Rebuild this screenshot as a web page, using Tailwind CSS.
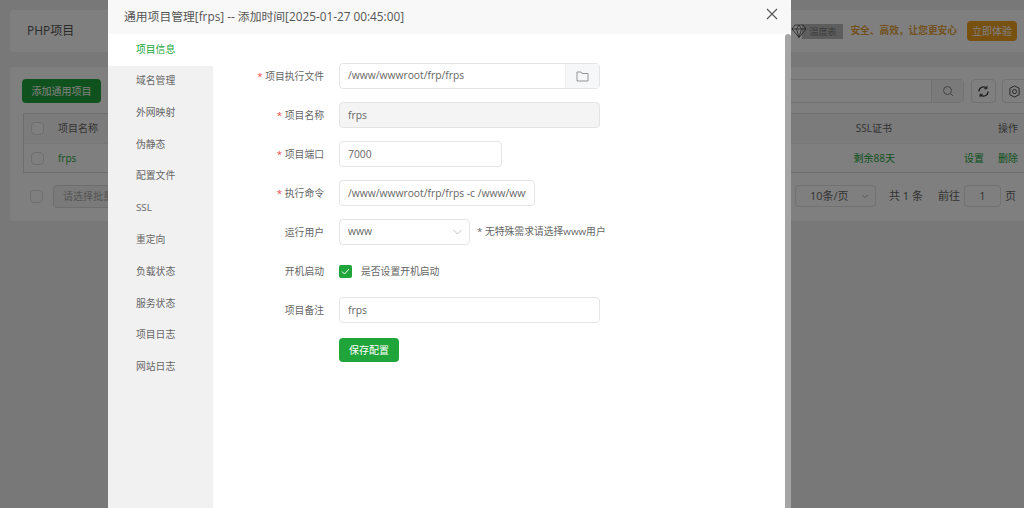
<!DOCTYPE html>
<html lang="zh-CN">

<head>
    <meta charset="UTF-8">
    <meta name="viewport" content="width=device-width, initial-scale=1.0">
    <title>通用项目管理</title>
    <script src="https://cdn.jsdelivr.net/npm/@tailwindcss/browser@4"></script>
</head>

<body class="overflow-hidden">
    <main class="relative w-[1024px] h-[508px] overflow-hidden bg-[#f0f0f0] font-['Open_Sans','Noto_Sans_CJK_SC',sans-serif] text-[#666]">
        <!-- page behind the dialog -->
        <div class="pl-[10px] pt-[10px]">
            <div class="h-[42px] bg-white rounded-l flex items-center pl-[17px] pr-[7px]">
                <span class="text-[12px] text-[#555] flex-1">PHP项目</span>
                <svg class="relative w-[16px] h-[16px] -mr-[5px] text-[#444]" viewBox="0 0 16 16" fill="none" stroke="currentColor" stroke-width="0.8"><path d="M4 2h8l3 4-7 8.500L1 6zM1 6h14M5.500 6 8 14.500 10.500 6 8 2 5.500 6z" /></svg>
                <span class="w-[41px] h-[15px] bg-[#bbb] text-[9px] leading-[15px] text-center text-[#777] mr-[7px]">温度表</span>
                <span class="text-[9.700px] font-semibold text-[#e6a23c] mr-[10px]">安全、高效，让您更安心</span>
                <span class="w-[50px] h-[20px] rounded-sm bg-[#f0a020] text-[10px] leading-[20px] text-center text-white">立即体验</span>
            </div>
            <div class="mt-[15px] h-[154px] bg-white rounded-l pl-[12px] pt-[12px]">
                <div class="flex items-center h-[24px]">
                    <button class="w-[79px] h-[24px] rounded bg-[#20a53a] text-white text-[10px]">添加通用项目</button>
                    <div class="flex-1"></div>
                    <div class="w-[190px] h-[24px] flex border border-[#e4e4e4] rounded-sm">
                        <div class="flex-1"></div>
                        <div class="w-[32px] bg-[#f5f5f5] border-l border-[#e4e4e4] flex items-center justify-center">
                            <svg class="w-[12px] h-[12px] text-[#888]" viewBox="0 0 12 12" fill="none" stroke="currentColor"><circle cx="5.500" cy="5.500" r="4" /><path d="m8.500 8.500 2.500 2.500" /></svg>
                        </div>
                    </div>
                    <div class="ml-[7px] w-[25px] h-[24px] border border-[#e4e4e4] rounded-sm flex items-center justify-center">
                        <svg class="w-[13px] h-[13px] text-[#333]" viewBox="0 0 14 14" fill="none" stroke="currentColor" stroke-width="1.300"><path d="M2 7a5 5 0 0 1 8.500-3.500M12 7a5 5 0 0 1-8.500 3.500" /><path d="M10.800 1v3h-3M3.200 13v-3h3" stroke-width="1" /></svg>
                    </div>
                    <div class="ml-[6px] w-[22px] h-[24px] border border-[#e4e4e4] border-r-0 rounded-l-sm flex items-center pl-[5px]">
                        <svg class="w-[13px] h-[13px] shrink-0 text-[#444]" viewBox="0 0 14 14" fill="none" stroke="currentColor"><path d="m7 1 5 2.500v7L7 13l-5-2.500v-7z" /><circle cx="7" cy="7" r="2.200" /></svg>
                    </div>
                </div>
                <div class="mt-[10px] ml-[1px] border-y border-l border-[#ddd] h-[60px] text-[10px]">
                    <div class="h-[30px] bg-[#f7f7f7] flex items-center border-b border-[#eee]">
                        <span class="ml-[7px] w-[13px] h-[13px] border border-[#ddd] bg-white rounded-sm"></span>
                        <span class="ml-[14px] text-[#666]">项目名称</span>
                        <span class="ml-auto mr-[106px]">SSL证书</span>
                        <span class="mr-[6px]">操作</span>
                    </div>
                    <div class="h-[29px] flex items-center">
                        <span class="ml-[7px] w-[13px] h-[13px] border border-[#ddd] bg-white rounded-sm"></span>
                        <span class="ml-[14px] text-[#20a53a]">frps</span>
                        <span class="ml-auto mr-[69px] text-[#20a53a]">剩余88天</span>
                        <span class="mr-[14px] text-[#20a53a]">设置</span>
                        <span class="mr-[6px] text-[#20a53a]">删除</span>
                    </div>
                </div>
                <div class="mt-[11px] flex items-center h-[24px] text-[11px]">
                    <span class="ml-[8px] w-[13px] h-[13px] border border-[#ddd] rounded-sm"></span>
                    <span class="ml-[10px] w-[70px] h-[23px] border border-[#ddd] bg-[#f5f5f5] rounded-sm text-[10px] leading-[21px] pl-[9px] text-[#aaa]">请选择批量</span>
                    <div class="flex-1"></div>
                    <span class="w-[81px] h-[22px] border border-[#e4e4e4] rounded-sm pl-[14px] mr-[13px] flex items-center justify-between pr-[6px]">10条/页<svg class="w-[8px] h-[8px] text-[#bbb]" viewBox="0 0 8 8" fill="none" stroke="currentColor"><path d="m1 3 3 2.500L7 3" /></svg></span>
                    <span class="mr-[15px]">共 1 条</span>
                    <span>前往</span>
                    <span class="mx-[4px] w-[37px] h-[22px] border border-[#e4e4e4] rounded-sm text-center leading-[20px]">1</span>
                    <span class="mr-[8px]">页</span>
                </div>
            </div>
        </div>

        <!-- mask -->
        <div class="absolute inset-0 bg-black/50"></div>

        <!-- dialog -->
        <div class="absolute left-[108px] top-0 w-[683px] h-[508px] bg-white flex flex-col">
            <div class="h-[34px] shrink-0 bg-[#f8f8f8] flex items-center pl-[16px] relative">
                <span class="text-[11.800px] text-[#555]">通用项目管理[frps] -- 添加时间[2025-01-27 00:45:00]</span>
                <svg class="absolute right-[13px] top-[8px] w-[12px] h-[12px] text-[#555]" viewBox="0 0 12 12" fill="none" stroke="currentColor" stroke-width="1.100"><path d="m1 1 10 10M11 1 1 11" /></svg>
            </div>
            <div class="flex flex-1 min-h-0 relative">
                <!-- side menu -->
                <div class="w-[105px] shrink-0 flex flex-col">
                    <div class="h-[32px] bg-white pl-[28px] pt-[7px] text-[9.800px] leading-[18px] text-[#20a53a]">项目信息</div>
                    <div class="flex-1 bg-[#f1f1f1] pl-[28px] text-[9.800px] text-[#666] flex flex-col">
                        <span class="h-[31.800px] leading-[30px]">域名管理</span>
                        <span class="h-[31.800px] leading-[30px]">外网映射</span>
                        <span class="h-[31.800px] leading-[30px]">伪静态</span>
                        <span class="h-[31.800px] leading-[30px]">配置文件</span>
                        <span class="h-[31.800px] leading-[30px]">SSL</span>
                        <span class="h-[31.800px] leading-[30px]">重定向</span>
                        <span class="h-[31.800px] leading-[30px]">负载状态</span>
                        <span class="h-[31.800px] leading-[30px]">服务状态</span>
                        <span class="h-[31.800px] leading-[30px]">项目日志</span>
                        <span class="h-[31.800px] leading-[30px]">网站日志</span>
                    </div>
                </div>
                <!-- form -->
                <div class="flex-1 pt-[29px] text-[9.800px] text-[#666] flex flex-col gap-[13px]">
                    <div class="flex items-center h-[26px]">
                        <label class="w-[111px] pt-[2px] text-right"><span class="text-[#ef4444]">*</span> 项目执行文件</label>
                        <div class="ml-[15px] w-[261px] h-[26px] flex border border-[#e4e4e4] rounded-sm">
                            <input class="flex-1 min-w-0 pl-[8px] text-[10.300px] outline-none" value="/www/wwwroot/frp/frps" readonly>
                            <span class="w-[34px] bg-[#f5f7f9] border-l border-[#eee] flex items-center justify-center">
                                <svg class="w-[13px] h-[12px] text-[#888]" viewBox="0 0 13 12" fill="none" stroke="currentColor" stroke-width="0.900"><path d="M1 2h4l1 1.500h6V11H1z" /></svg>
                            </span>
                        </div>
                    </div>
                    <div class="flex items-center h-[26px]">
                        <label class="w-[111px] pt-[2px] text-right"><span class="text-[#ef4444]">*</span> 项目名称</label>
                        <input class="ml-[15px] w-[261px] h-[26px] border border-[#e4e4e4] bg-[#f4f4f4] rounded-sm text-[10.300px] pl-[8px] outline-none" value="frps" readonly>
                    </div>
                    <div class="flex items-center h-[26px]">
                        <label class="w-[111px] pt-[2px] text-right"><span class="text-[#ef4444]">*</span> 项目端口</label>
                        <input class="ml-[15px] w-[163px] h-[26px] border border-[#e4e4e4] rounded-sm text-[10.300px] pl-[8px] outline-none" value="7000" readonly>
                    </div>
                    <div class="flex items-center h-[26px]">
                        <label class="w-[111px] pt-[2px] text-right"><span class="text-[#ef4444]">*</span> 执行命令</label>
                        <input class="ml-[15px] w-[196px] h-[26px] border border-[#e4e4e4] rounded-sm text-[10.300px] pl-[8px] pr-[8px] outline-none" value="/www/wwwroot/frp/frps -c /www/wwwroot/frp/frps.toml" readonly>
                    </div>
                    <div class="flex items-center h-[26px]">
                        <label class="w-[111px] pt-[2px] text-right">运行用户</label>
                        <div class="ml-[15px] w-[131px] h-[26px] border border-[#e4e4e4] rounded-sm text-[10.300px] pl-[8px] pr-[7px] flex items-center justify-between">
                            www
                            <svg class="w-[9px] h-[6px] text-[#bbb]" viewBox="0 0 9 6" fill="none" stroke="currentColor" stroke-width="0.900"><path d="m.5 1 4 4 4-4" /></svg>
                        </div>
                        <span class="ml-[7px] whitespace-nowrap">* 无特殊需求请选择www用户</span>
                    </div>
                    <div class="flex items-center h-[26px]">
                        <label class="w-[111px] pt-[2px] text-right">开机启动</label>
                        <span class="ml-[15px] w-[13px] h-[13px] bg-[#20a53a] rounded-[2px] flex items-center justify-center">
                            <svg class="w-[9px] h-[9px] text-white" viewBox="0 0 9 9" fill="none" stroke="currentColor"><path d="m1 4.500 2.500 2.500L8 2" /></svg>
                        </span>
                        <span class="ml-[9px] pt-[2px]">是否设置开机启动</span>
                    </div>
                    <div class="flex items-center h-[26px]">
                        <label class="w-[111px] pt-[2px] text-right">项目备注</label>
                        <input class="ml-[15px] w-[261px] h-[26px] border border-[#e4e4e4] rounded-sm text-[10.300px] pl-[8px] outline-none" value="frps" readonly>
                    </div>
                    <div class="flex h-[24px] pl-[126px] mt-[2px]">
                        <button class="w-[60px] h-[24px] rounded-sm bg-[#20a53a] text-white text-[10px]">保存配置</button>
                    </div>
                </div>
                <div class="absolute right-0 top-0 bottom-0 w-[6px] bg-[#a5a5a5] rounded-t-sm"></div>
            </div>
        </div>
    </main>
</body>

</html>
